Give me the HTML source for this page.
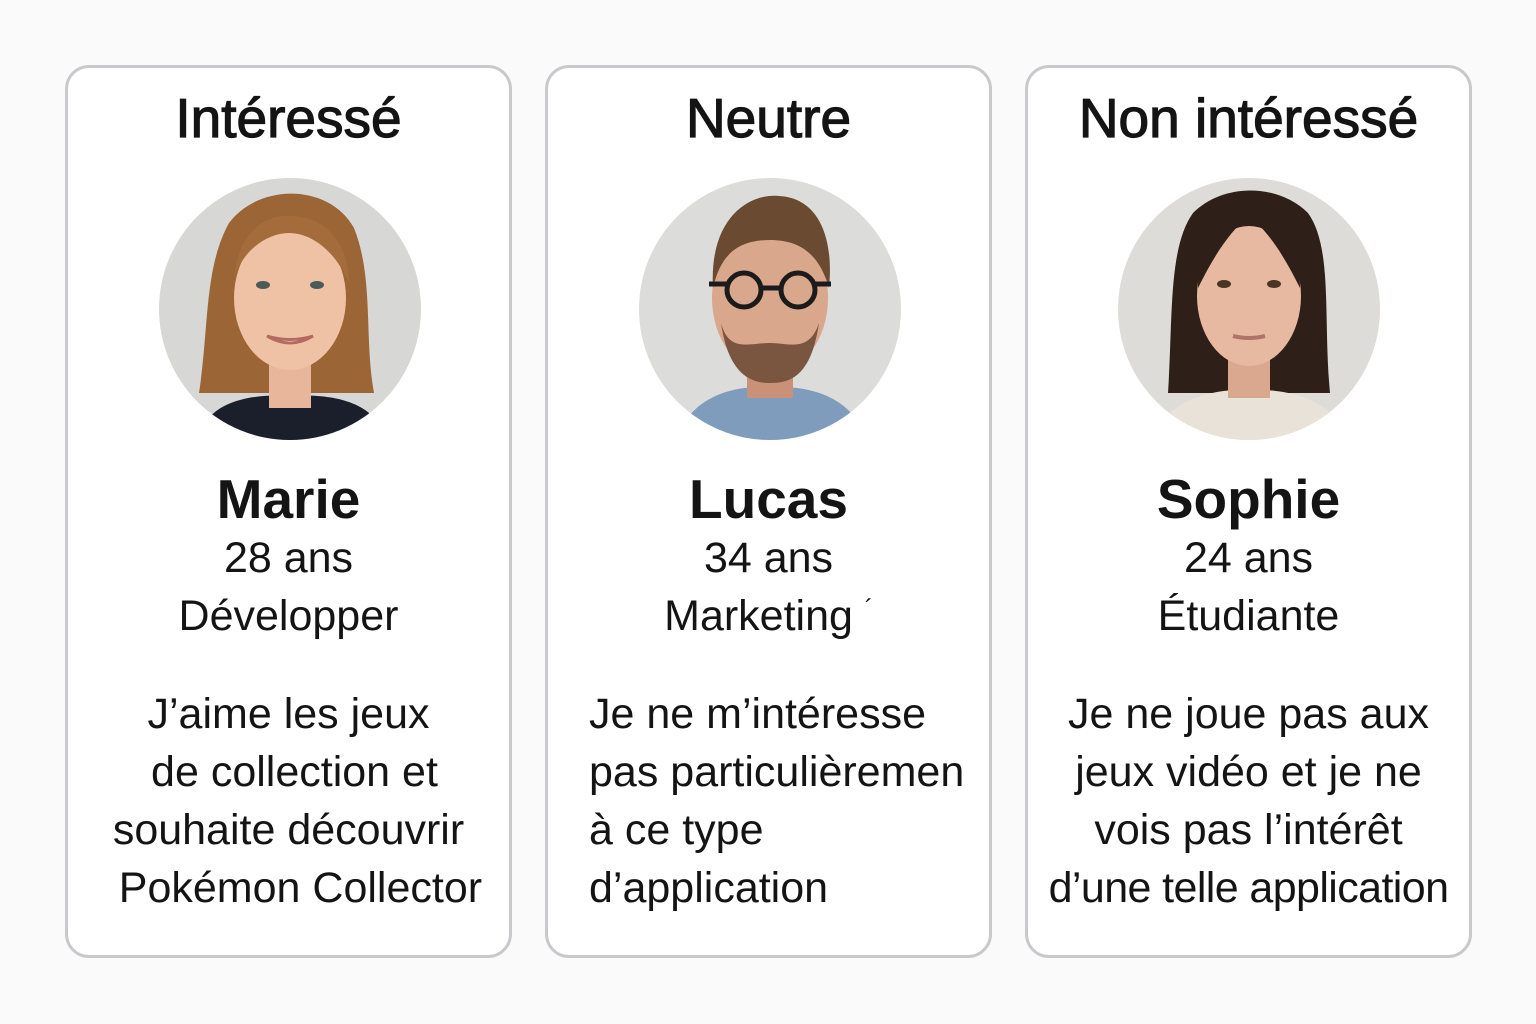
<!DOCTYPE html>
<html><head><meta charset="utf-8"><style>
html,body{margin:0;padding:0;background:#fafafa;width:1536px;height:1024px;overflow:hidden;font-family:"Liberation Sans","DejaVu Sans",sans-serif;color:#141414}
.card{position:absolute;top:65px;width:441px;height:887px;border:3px solid #c9c9cd;border-radius:24px;background:#fff}
.t{position:absolute;left:0;width:100%;text-align:center;white-space:nowrap;line-height:1}
.title{top:23px;font-size:55px;font-weight:500;-webkit-text-stroke:1.2px #141414}
.name{top:404px;font-size:55px;font-weight:bold}
.age{top:469px;font-size:43px}
.job{top:527px;font-size:43px}
.body{position:absolute;top:617px;font-size:43px;line-height:58px;white-space:nowrap}
svg{position:absolute;top:110px}
</style></head><body>

<div class="card" style="left:65px">
<div class="t title">Intéressé</div>
<svg style="left:91px" width="262" height="262" viewBox="0 0 262 262"><defs><clipPath id="c1"><circle cx="131" cy="131" r="131"/></clipPath></defs>
<g clip-path="url(#c1)"><rect width="262" height="262" fill="#d7d8d6"/>
<path d="M40 215 C50 150 45 90 70 45 C100 5 170 5 195 50 C215 100 205 160 215 215 Z" fill="#9b6535"/>
<path d="M40 262 C45 225 90 215 131 218 C175 215 220 225 225 262 Z" fill="#1b1f2b"/>
<rect x="110" y="175" width="42" height="55" fill="#e8b79b"/>
<ellipse cx="131" cy="120" rx="56" ry="72" fill="#efc2a5"/>
<path d="M75 100 C80 50 110 35 135 38 C170 40 190 70 190 105 C175 70 150 55 130 55 C110 55 85 70 75 100Z" fill="#a56c3b"/>
<ellipse cx="104" cy="107" rx="7" ry="4" fill="#4d5a5a"/><ellipse cx="158" cy="107" rx="7" ry="4" fill="#4d5a5a"/>
<path d="M108 158 Q131 172 154 158 Q131 165 108 158Z" fill="#fff" stroke="#b46a5e" stroke-width="3"/></g></svg>
<div class="t name">Marie</div><div class="t age">28 ans</div><div class="t job">Développer</div>
<div class="body" style="left:0;width:100%;text-align:center">J’aime les jeux<br>&nbsp;de collection et<br>souhaite découvrir<br>&nbsp;&nbsp;Pokémon Collector</div>
</div>

<div class="card" style="left:545px">
<div class="t title">Neutre</div>
<svg style="left:91px" width="262" height="262" viewBox="0 0 262 262"><defs><clipPath id="c2"><circle cx="131" cy="131" r="131"/></clipPath></defs>
<g clip-path="url(#c2)"><rect width="262" height="262" fill="#dcdcda"/>
<path d="M40 262 C45 225 90 205 131 210 C175 205 220 225 225 262 Z" fill="#7f9cbc"/>
<rect x="108" y="170" width="46" height="50" fill="#c99278"/>
<ellipse cx="131" cy="120" rx="58" ry="76" fill="#d9a78c"/>
<path d="M74 110 C70 40 110 15 140 18 C180 20 195 60 190 110 C180 75 160 62 131 62 C100 62 82 75 74 110Z" fill="#6b4a32"/>
<path d="M82 145 C90 200 115 205 131 205 C150 205 172 200 180 145 C170 175 150 165 131 165 C110 165 90 175 82 145Z" fill="#7a5540"/>
<circle cx="105" cy="112" r="17" fill="none" stroke="#1b1b1b" stroke-width="5"/><circle cx="159" cy="112" r="17" fill="none" stroke="#1b1b1b" stroke-width="5"/>
<path d="M122 110 H140 M70 106 H88 M176 106 H192" stroke="#1b1b1b" stroke-width="5"/></g></svg>
<div class="t name">Lucas</div><div class="t age">34 ans</div><div class="t job">Marketing <span style="font-size:24px;vertical-align:14px">´</span></div>
<div class="body" style="left:41px">Je ne m’intéresse<br>pas particulièremen<br>à ce type<br>d’application</div>
</div>

<div class="card" style="left:1025px">
<div class="t title">Non intéressé</div>
<svg style="left:90px" width="262" height="262" viewBox="0 0 262 262"><defs><clipPath id="c3"><circle cx="131" cy="131" r="131"/></clipPath></defs>
<g clip-path="url(#c3)"><rect width="262" height="262" fill="#dddcd9"/>
<path d="M50 215 C55 140 50 70 75 35 C105 5 160 5 190 35 C215 70 205 140 212 215 Z" fill="#2e2019"/>
<path d="M35 262 C45 225 90 210 131 212 C175 210 220 225 228 262 Z" fill="#e9e2d8"/>
<rect x="110" y="170" width="42" height="50" fill="#d9a88f"/>
<ellipse cx="131" cy="118" rx="52" ry="70" fill="#e7b9a0"/>
<path d="M80 110 C80 50 110 35 131 38 C110 55 95 80 80 110Z M182 110 C182 50 152 35 131 38 C152 55 167 80 182 110Z" fill="#2e2019"/>
<ellipse cx="106" cy="106" rx="7" ry="4" fill="#4a3525"/><ellipse cx="156" cy="106" rx="7" ry="4" fill="#4a3525"/>
<path d="M115 158 Q131 162 147 158" stroke="#b0736a" stroke-width="4" fill="none"/></g></svg>
<div class="t name">Sophie</div><div class="t age">24 ans</div><div class="t job">Étudiante</div>
<div class="body" style="left:0;width:100%;text-align:center">Je ne joue pas aux<br>jeux vidéo et je ne<br>vois pas l’intérêt<br><span style="letter-spacing:-0.6px">d’une telle application</span></div>
</div>

</body></html>
